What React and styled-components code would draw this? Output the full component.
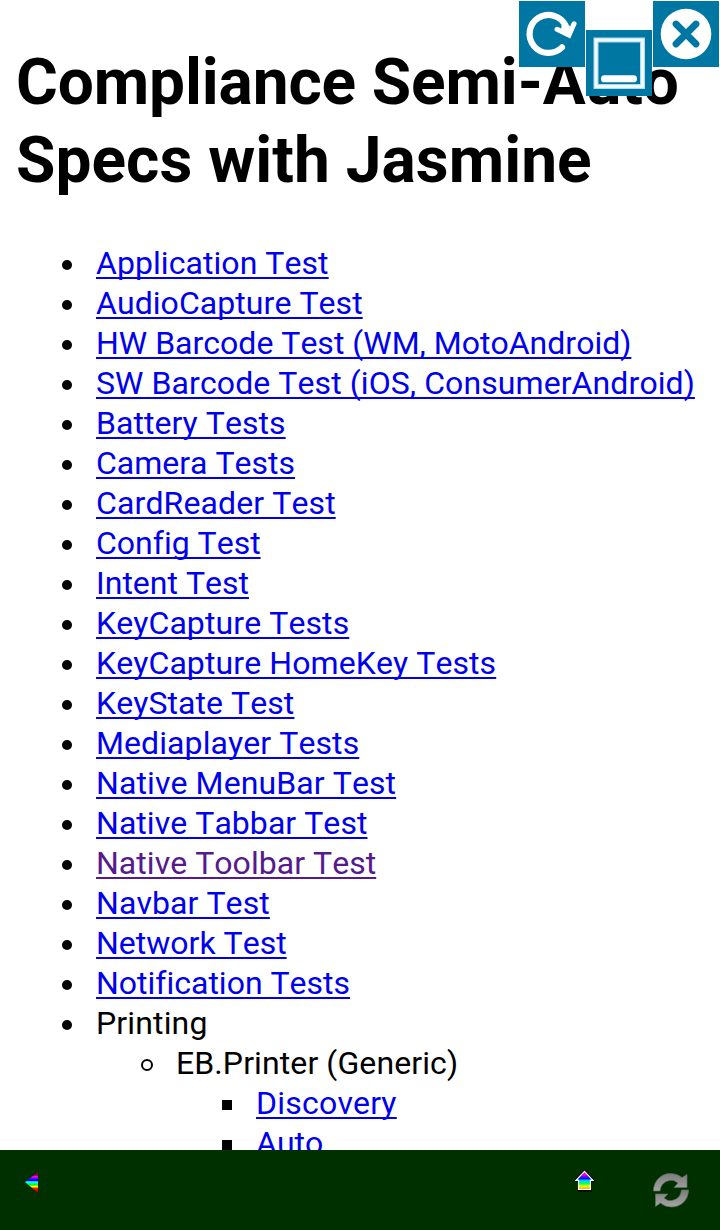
import React from 'react';
import styled, { createGlobalStyle, css } from 'styled-components';

const GlobalStyle = createGlobalStyle`
  *, *::before, *::after { box-sizing: border-box; }
  body { margin: 0; background: #fff; }
`;

const Screen = styled.div`
  position: relative;
  display: flex;
  flex-direction: column;
  width: 720px;
  height: 1230px;
  overflow: hidden;
  background: #fff;
  color: #000;
  font-family: Roboto, 'Liberation Sans', sans-serif;
  font-kerning: none;
  font-variant-ligatures: none;
`;

const Page = styled.main`
  flex: 1;
  min-height: 0;
  overflow: hidden;
  padding: 44px 16px 0;
`;

const Title = styled.h1`
  margin: 0 0 43px;
  font-size: 64px;
  font-weight: 700;
  line-height: 78px;
  white-space: nowrap;
`;

const TitleLine = styled.span`
  display: block;
  letter-spacing: ${({ $track }) => $track}px;
`;

const List = styled.ul`
  margin: 0;
  padding: 0 0 0 ${({ $nested }) => ($nested ? 80 : 0)}px;
  list-style: none;
`;

const Row = styled.div`
  display: flex;
  align-items: center;
  height: 40px;
  padding-left: ${({ $kind }) => ($kind === 'circle' ? 45 : 46)}px;
  font-size: 32px;
  line-height: 40px;
  white-space: nowrap;
`;

const markers = {
  disc: css`
    width: 10px;
    height: 10px;
    margin-right: 24px;
    border-radius: 50%;
    background: #000;
  `,
  circle: css`
    width: 12px;
    height: 12px;
    margin-right: 23px;
    border: 2px solid #000;
    border-radius: 50%;
  `,
  square: css`
    width: 10px;
    height: 10px;
    margin-right: 24px;
    background: #000;
  `,
};

const Marker = styled.span`
  flex: none;
  margin-top: 4px;
  ${({ $kind }) => markers[$kind]}
`;

const label = css`
  letter-spacing: ${({ $track }) => $track || 0}px;
`;

const Text = styled.span`
  ${label}
`;

const Link = styled.a`
  ${label}
  color: ${({ $visited }) => ($visited ? '#551a8b' : '#0000ee')};
  text-decoration: underline;
  text-decoration-thickness: 2px;
  text-decoration-skip-ink: none;
  text-underline-offset: 3px;
`;

const FloatingControls = styled.div`
  position: absolute;
  top: 1px;
  right: 1px;
  display: flex;
  gap: 1px;
`;

const Control = styled.button`
  width: 66px;
  height: 66px;
  margin: ${({ $drop }) => $drop || 0}px 0 0;
  padding: 0;
  border: 0;
  background: #0076a3;
  svg { display: block; }
`;

const BottomBar = styled.footer`
  display: flex;
  align-items: flex-start;
  height: 80px;
  flex: none;
  background: #003000;
  padding: 20px 30px 0 25px;
`;

const BarButton = styled.button`
  padding: 0;
  border: 0;
  background: none;
  margin: ${({ $top }) => $top || 0}px ${({ $after }) => $after || 0}px 0 ${({ $push }) => ($push ? 'auto' : 0)};
  svg { display: block; }
`;

const tests = [
  ['Application Test', 0.06],
  ['AudioCapture Test', 0.06],
  ['HW Barcode Test (WM, MotoAndroid)', 0],
  ['SW Barcode Test (iOS, ConsumerAndroid)', 0.08],
  ['Battery Tests', 0.07],
  ['Camera Tests', 0],
  ['CardReader Test', 0.11],
  ['Config Test', 0],
  ['Intent Test', 0],
  ['KeyCapture Tests', 0.09],
  ['KeyCapture HomeKey Tests', 0.09],
  ['KeyState Test', 0.07],
  ['Mediaplayer Tests', 0.09],
  ['Native MenuBar Test', 0.1],
  ['Native Tabbar Test', 0.05],
  ['Native Toolbar Test', 0.04, true],
  ['Navbar Test', 0.08],
  ['Network Test', 0],
  ['Notification Tests', 0],
];

function LinkRow({ kind = 'disc', text, track, visited }) {
  return (
    <Row $kind={kind}>
      <Marker $kind={kind} />
      <Link href="#" $track={track} $visited={visited}>{text}</Link>
    </Row>
  );
}

function ReloadIcon() {
  return (
    <svg width="66" height="66" viewBox="0 0 66 66" fill="none">
      <path d="M43 46.4 A19 19 0 1 1 46.6 24.5" stroke="#fff" strokeWidth="6.2" strokeLinecap="round" />
      <path d="M38 28.3 L50 34.2 L55 22.8" stroke="#fff" strokeWidth="5" strokeLinecap="round" strokeLinejoin="miter" />
      <path d="M43 22 L51 25 L50 33 L42 29 Z" fill="#fff" />
    </svg>
  );
}

function MinimizeIcon() {
  return (
    <svg width="66" height="66" viewBox="0 0 66 66" fill="none">
      <rect x="10" y="10" width="46.5" height="46.5" stroke="#b4dbe9" strokeWidth="5" />
      <rect x="10" y="10" width="46.5" height="46.5" stroke="#f2fafd" strokeWidth="2.8" />
      <rect x="15" y="45.3" width="36" height="7" rx="3.4" fill="#fff" />
    </svg>
  );
}

function CloseIcon() {
  return (
    <svg width="66" height="66" viewBox="0 0 66 66" fill="none">
      <circle cx="33" cy="33" r="25.3" fill="#fff" />
      <path d="M23 23 L43 43 M43 23 L23 43" stroke="#0076a3" strokeWidth="6.8" strokeLinecap="round" />
    </svg>
  );
}

const backBands = ['#900020', '#900020', '#8a0030', '#b00070', '#ff00e0', '#c000ff', '#7000ff', '#2500ff', '#0000ff', '#00c8ff', '#00ffff', '#00ff80', '#00ff20', '#60ff00', '#ffff00', '#ff9000', '#ff1800', '#ff0000', '#e00000', '#b00000', '#800000'];

function BackIcon() {
  return (
    <svg width="13" height="21" viewBox="0 0 13 21">
      <clipPath id="back"><path d="M0 10 L13 0 V21 Z" /></clipPath>
      <g clipPath="url(#back)">
        {backBands.map((c, i) => <rect key={i} y={i} width="13" height="1.05" fill={c} />)}
      </g>
    </svg>
  );
}

function HomeIcon() {
  return (
    <svg width="20" height="22" viewBox="0 0 20 22">
      <defs>
        <linearGradient id="home" x1="0" y1="0" x2="0" y2="1">
          <stop offset="0" stopColor="#ff0040" />
          <stop offset=".16" stopColor="#ff00d0" />
          <stop offset=".28" stopColor="#8000ff" />
          <stop offset=".4" stopColor="#0010ff" />
          <stop offset=".52" stopColor="#00d8ff" />
          <stop offset=".66" stopColor="#00ff50" />
          <stop offset=".82" stopColor="#e8ff00" />
          <stop offset="1" stopColor="#ff9830" />
        </linearGradient>
      </defs>
      <path d="M9.5 .8 L19 10.8 H16 V20.5 H3.5 V10.8 H0 Z" fill="#000" stroke="#000" strokeWidth="2" />
      <path d="M9.5 1.3 L18 10.3 H15.5 V19.5 H3.5 V10.3 H1 Z" fill="url(#home)" stroke="#fff" strokeWidth="1.2" />
    </svg>
  );
}

function SyncIcon() {
  return (
    <svg width="38" height="38" viewBox="0 0 38 38">
      <defs>
        <linearGradient id="syncFill" x1="0" y1="0" x2="0" y2="1">
          <stop offset="0" stopColor="#7c7c7c" />
          <stop offset="1" stopColor="#a4a4a4" />
        </linearGradient>
      </defs>
      <g fill="url(#syncFill)" stroke="#5c6f5c" strokeWidth=".7">
        <path d="M1.5 19 C1.5 9 9 1.5 18.5 1.5 Q25 1.5 30 5.5 L35 2.5 V15.5 H22 L26 11 Q22 7.5 17.5 8.5 Q9 10 8 19 Z" />
        <path d="M36.5 18 C36.5 28 29 35 19.5 35 Q13 35 8.5 31 L3.5 34.5 V22 H16 L12 26 Q16 29.5 20 28.5 Q28.5 27 29.5 18 Z" />
      </g>
    </svg>
  );
}

export default function App() {
  return (
    <Screen>
      <GlobalStyle />
      <Page>
        <Title>
          <TitleLine $track={-0.13}>Compliance Semi-Auto</TitleLine>
          <TitleLine $track={0.03}>Specs with Jasmine</TitleLine>
        </Title>
        <List>
          {tests.map(([text, track, visited]) => (
            <li key={text}><LinkRow text={text} track={track} visited={visited} /></li>
          ))}
          <li>
            <Row $kind="disc"><Marker $kind="disc" /><Text $track={0.14}>Printing</Text></Row>
            <List $nested>
              <li>
                <Row $kind="circle"><Marker $kind="circle" /><Text $track={0.1}>EB.Printer (Generic)</Text></Row>
                <List $nested>
                  <li><LinkRow kind="square" text="Discovery" track={0.22} /></li>
                  <li><LinkRow kind="square" text="Auto" track={0} /></li>
                </List>
              </li>
            </List>
          </li>
        </List>
      </Page>
      <FloatingControls>
        <Control aria-label="Reload"><ReloadIcon /></Control>
        <Control aria-label="Minimize" $drop={29}><MinimizeIcon /></Control>
        <Control aria-label="Close"><CloseIcon /></Control>
      </FloatingControls>
      <BottomBar>
        <BarButton aria-label="Back" $top={2}><BackIcon /></BarButton>
        <BarButton aria-label="Home" $push $after={57}><HomeIcon /></BarButton>
        <BarButton aria-label="Refresh" $top={2}><SyncIcon /></BarButton>
      </BottomBar>
    </Screen>
  );
}
